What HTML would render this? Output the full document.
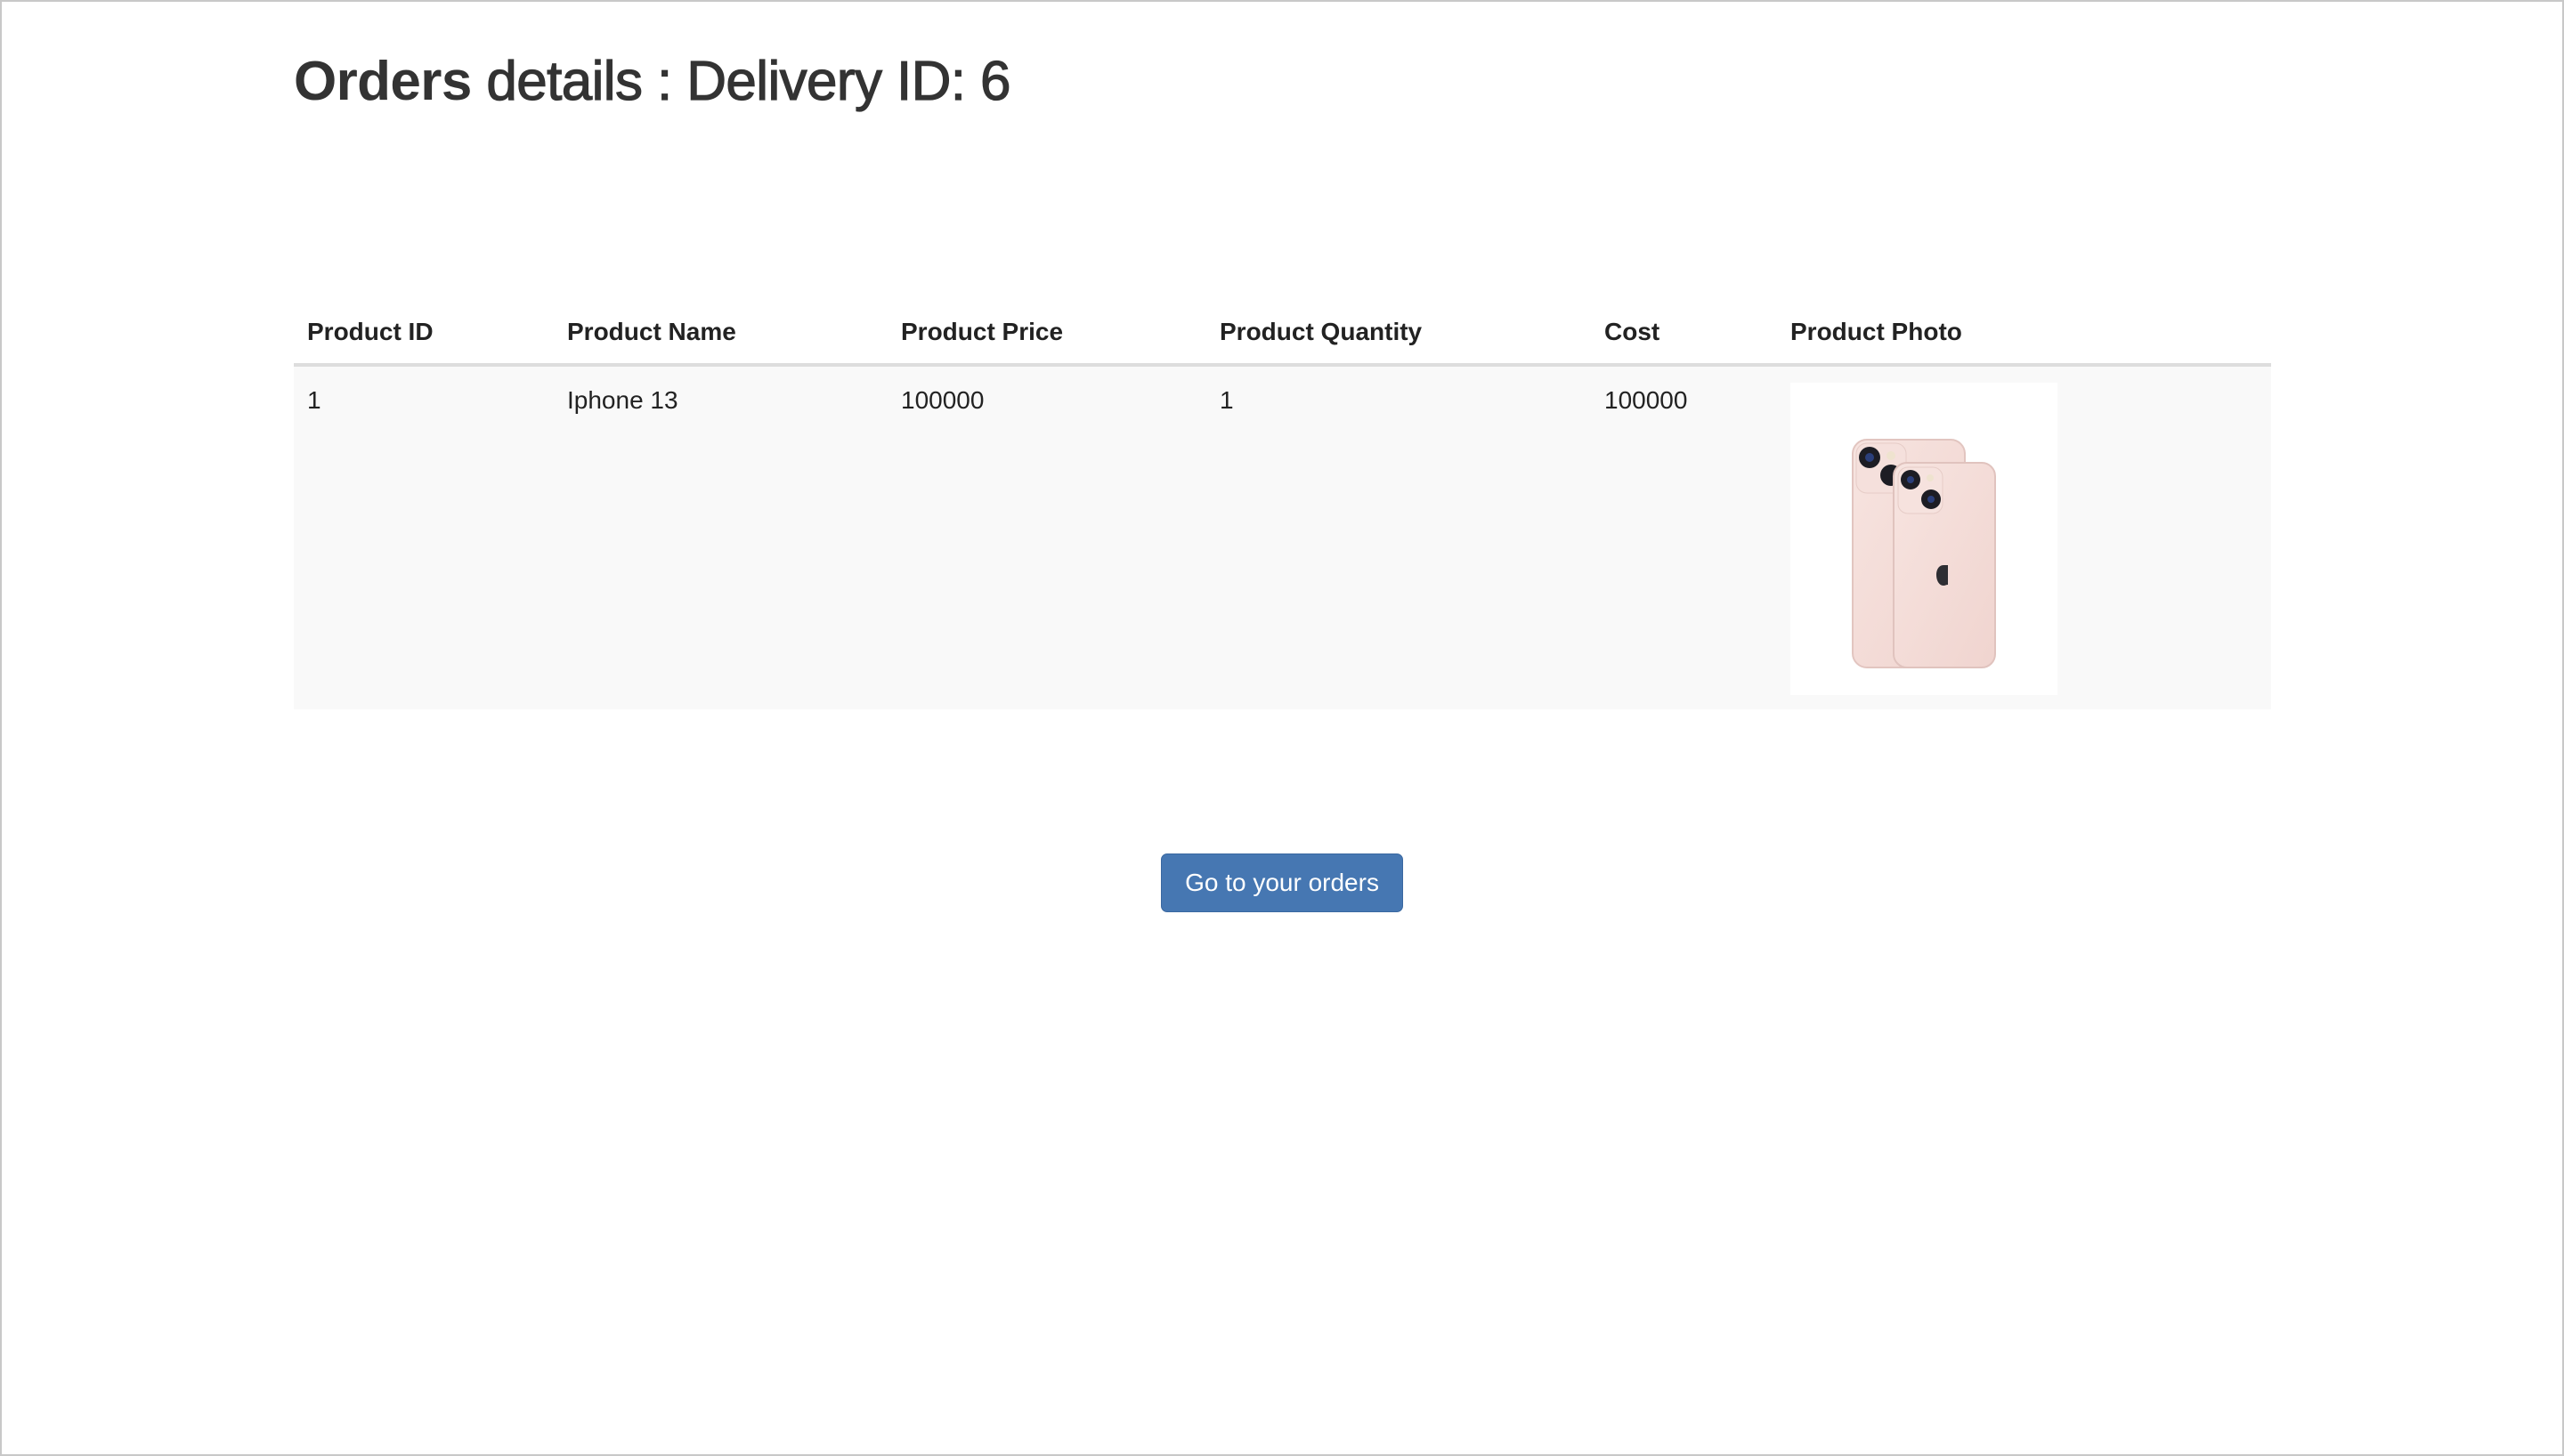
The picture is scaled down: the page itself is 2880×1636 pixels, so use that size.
<!DOCTYPE html>
<html><head><meta charset="utf-8"><style>
html,body{margin:0;padding:0}
body{width:2880px;height:1636px;background:#fff;font-family:"Liberation Sans",Arial,sans-serif;color:#333;position:relative;overflow:hidden}
.frame{position:absolute;left:0;top:0;width:2880px;height:1636px;box-sizing:border-box;border:2px solid #c8c8c8;pointer-events:none}
h1{position:absolute;left:330px;top:56px;margin:0;font-size:62px;font-weight:normal;-webkit-text-stroke:1.2px #333;letter-spacing:-0.6px;white-space:nowrap}
h1 b{-webkit-text-stroke:0}
.t{position:absolute;font-size:28px;color:#222;white-space:nowrap}
.th{font-weight:bold;top:357px}
.td{top:434px}
.line{position:absolute;left:330px;width:2221px;top:408px;height:4px;background:#ddd}
.row{position:absolute;left:330px;width:2221px;top:412px;height:385px;background:#f9f9f9}
.img{position:absolute;left:2011px;top:430px;width:300px;height:351px;background:#fff}
.btn{position:absolute;left:1304px;top:959px;width:272px;height:66px;background:#4677b2;border:1px solid #3a68a0;box-sizing:border-box;border-radius:7px;color:#fff;font-size:28px;text-align:center;line-height:64px}
</style></head><body>
<h1><b>Orders</b> details : Delivery ID: 6</h1>
<div class="t th" style="left:345px">Product ID</div>
<div class="t th" style="left:637px">Product Name</div>
<div class="t th" style="left:1012px">Product Price</div>
<div class="t th" style="left:1370px">Product Quantity</div>
<div class="t th" style="left:1802px">Cost</div>
<div class="t th" style="left:2011px">Product Photo</div>
<div class="line"></div>
<div class="row"></div>
<div class="t td" style="left:345px">1</div>
<div class="t td" style="left:637px">Iphone 13</div>
<div class="t td" style="left:1012px">100000</div>
<div class="t td" style="left:1370px">1</div>
<div class="t td" style="left:1802px">100000</div>
<div class="img"><svg width="300" height="351" viewBox="0 0 300 351">
<defs><linearGradient id="g" x1="0" y1="0" x2="1" y2="1"><stop offset="0" stop-color="#f7e4e0"/><stop offset="1" stop-color="#f0d4cf"/></linearGradient></defs>
<rect x="70" y="64" width="126" height="256" rx="16" fill="url(#g)" stroke="#e2c5c0" stroke-width="2"/>
<rect x="74" y="68" width="56" height="56" rx="12" fill="#f5e0dc" stroke="#e6ccc7"/>
<circle cx="89" cy="84" r="12" fill="#1d1d24"/><circle cx="89" cy="84" r="5" fill="#2b3f7a"/>
<circle cx="113" cy="104" r="12" fill="#1d1d24"/>
<circle cx="113" cy="82" r="5" fill="#efe3cf"/>
<rect x="116" y="90" width="114" height="230" rx="15" fill="url(#g)" stroke="#e0c3be" stroke-width="2"/>
<rect x="121" y="95" width="50" height="52" rx="11" fill="#f6e2de" stroke="#e6ccc7"/>
<circle cx="135" cy="109" r="11" fill="#1d1d24"/><circle cx="135" cy="109" r="4" fill="#2b3f7a"/>
<circle cx="158" cy="131" r="11" fill="#1d1d24"/><circle cx="158" cy="131" r="4" fill="#2b3f7a"/>
<circle cx="157" cy="107" r="4" fill="#efe3cf"/>
<path d="M172 205c-5 0-8 5-8 11s3 12 8 12c2 0 3-1 5-1v-22c-2 0-3 0-5 0z" fill="#2e2e33"/>
</svg></div>
<div class="btn">Go to your orders</div>
<div class="frame"></div>
</body></html>
